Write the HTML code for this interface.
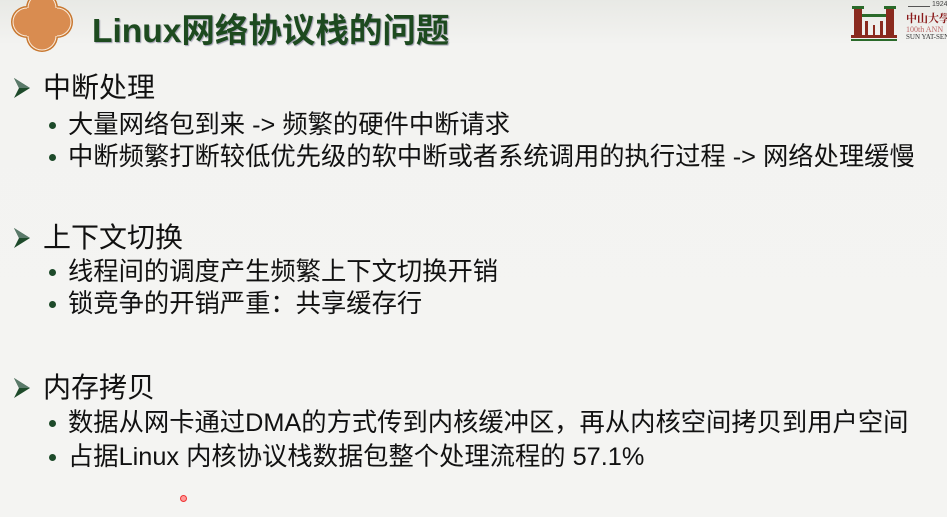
<!DOCTYPE html>
<html><head><meta charset="utf-8"><style>
body{margin:0;width:947px;height:517px;overflow:hidden;background:linear-gradient(#e8e9e5 0px,#f3f3f1 45px,#f4f4f2 100%);font-family:"Liberation Sans","Noto Sans CJK SC",sans-serif;position:relative}
.t{position:absolute;left:92px;top:3px;font-size:33.5px;font-weight:bold;color:#1d4a1f;text-shadow:1px 1px 1px #99a}
.h{position:absolute;left:43px;font-size:28px;color:#111;line-height:32px}
.a{position:absolute;left:13px}
.s{position:absolute;left:68px;font-size:25.3px;color:#111;line-height:30px;white-space:nowrap}
.d{position:absolute;left:49px;width:7px;height:7px;border-radius:50%;background:#1d4a2a}
</style></head><body>
<svg style="position:absolute;left:0;top:0" width="80" height="56" viewBox="0 0 80 56">
<g fill="#c8772f"><circle cx="42" cy="8" r="16"/><circle cx="42" cy="36" r="16"/><circle cx="27" cy="22" r="16"/><circle cx="57" cy="22" r="16"/></g>
<g fill="#fbeee0"><circle cx="42" cy="8" r="14.5"/><circle cx="42" cy="36" r="14.5"/><circle cx="27" cy="22" r="14.5"/><circle cx="57" cy="22" r="14.5"/></g>
<g fill="#d98c50"><circle cx="42" cy="8" r="13.5"/><circle cx="42" cy="36" r="13.5"/><circle cx="27" cy="22" r="13.5"/><circle cx="57" cy="22" r="13.5"/><rect x="27" y="8" width="30" height="28"/></g>
</svg>
<div class="t">Linux网络协议栈的问题</div>
<svg style="position:absolute;left:850px;top:3px" width="48" height="40" viewBox="0 0 48 40">
<rect x="4" y="6" width="8" height="26" fill="#8a2a1e"/><rect x="36" y="6" width="8" height="26" fill="#8a2a1e"/>
<rect x="2" y="3" width="12" height="3" fill="#2a6a2a"/><rect x="34" y="3" width="12" height="3" fill="#2a6a2a"/>
<rect x="12" y="11" width="24" height="3" fill="#2a6a2a"/>
<rect x="15" y="18" width="3" height="14" fill="#8a2a1e"/><rect x="23" y="22" width="2" height="10" fill="#8a2a1e"/><rect x="30" y="18" width="3" height="14" fill="#8a2a1e"/>
<rect x="1" y="32" width="46" height="3" fill="#8a2a1e"/><rect x="1" y="36" width="46" height="2" fill="#2a6a2a"/>
</svg>
<div style="position:absolute;left:908px;top:6px;width:22px;height:1px;background:#555"></div>
<div style="position:absolute;left:932px;top:1px;font-size:7px;color:#444">1924</div>
<div style="position:absolute;left:906px;top:10px;font-size:11px;color:#8a1a1a;font-weight:bold;font-family:'Noto Serif CJK SC',serif;white-space:nowrap">中山大學</div>
<div style="position:absolute;left:906px;top:25px;font-size:8px;color:#b66;white-space:nowrap;font-family:'Liberation Serif',serif">100th ANN</div>
<div style="position:absolute;left:906px;top:33px;font-size:7px;color:#333;white-space:nowrap;font-family:'Liberation Serif',serif">SUN YAT-SEN</div>

<svg class="a" style="top:77px" width="18" height="22" viewBox="0 0 18 22"><path d="M1 1 L17 11 L1 21 L6 11Z" fill="#1d4a2a"/><path d="M1 1 L17 11 L6 11Z" fill="#5a7a6a"/></svg>
<div class="h" style="top:72px">中断处理</div>
<div class="d" style="top:122px"></div><div class="s" style="top:110px">大量网络包到来 -&gt; 频繁的硬件中断请求</div>
<div class="d" style="top:154px"></div><div class="s" style="top:142px">中断频繁打断较低优先级的软中断或者系统调用的执行过程 -&gt; 网络处理缓慢</div>

<svg class="a" style="top:227px" width="18" height="22" viewBox="0 0 18 22"><path d="M1 1 L17 11 L1 21 L6 11Z" fill="#1d4a2a"/><path d="M1 1 L17 11 L6 11Z" fill="#5a7a6a"/></svg>
<div class="h" style="top:222px">上下文切换</div>
<div class="d" style="top:269px"></div><div class="s" style="top:257px">线程间的调度产生频繁上下文切换开销</div>
<div class="d" style="top:301px"></div><div class="s" style="top:289px">锁竞争的开销严重：共享缓存行</div>

<svg class="a" style="top:377px" width="18" height="22" viewBox="0 0 18 22"><path d="M1 1 L17 11 L1 21 L6 11Z" fill="#1d4a2a"/><path d="M1 1 L17 11 L6 11Z" fill="#5a7a6a"/></svg>
<div class="h" style="top:372px">内存拷贝</div>
<div class="d" style="top:420px"></div><div class="s" style="top:408px">数据从网卡通过DMA的方式传到内核缓冲区，再从内核空间拷贝到用户空间</div>
<div class="d" style="top:454px"></div><div class="s" style="top:442px">占据Linux 内核协议栈数据包整个处理流程的 57.1%</div>
<div style="position:absolute;left:180px;top:495px;width:5px;height:5px;border-radius:50%;border:1px solid #e33;background:#f99"></div>
</body></html>
